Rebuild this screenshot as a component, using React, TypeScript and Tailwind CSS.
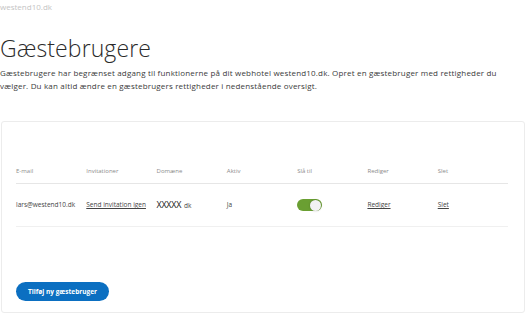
import React from 'react';

const COLUMNS = ['E-mail', 'Invitationer', 'Domæne', 'Aktiv', 'Slå til', 'Rediger', 'Slet'];

function Toggle({ on }: { on: boolean }) {
  return (
    <div className={`w-[25px] h-[12px] rounded-full flex items-center px-[1px] ${on ? 'bg-[#6a9f32] justify-end' : 'bg-gray-300 justify-start'}`}>
      <div className="w-[11px] h-[11px] rounded-full bg-[#f2f2f2] shadow-[0_0_2px_rgba(0,0,0,0.25)]" />
    </div>
  );
}

export default function App() {
  return (
    <div className="w-[527px] h-[317px] bg-white overflow-hidden font-['Open_Sans',sans-serif] text-[#333]">
      <div className="text-[8px] leading-[12px] text-[#c4c4c4] pt-[1px]">westend10.dk</div>

      <h1 className="mt-[20px] text-[23px] leading-[30px] font-light text-[#2a2a2a] tracking-[0.1px]">Gæstebrugere</h1>

      <p className="mt-[3px] text-[8px] leading-[13px] text-[#3a3a3a] tracking-[0.18px] pr-[8px]">
        Gæstebrugere har begrænset adgang til funktionerne på dit webhotel westend10.dk. Opret en gæstebruger med rettigheder du vælger. Du kan altid ændre en gæstebrugers rettigheder i nedenstående oversigt.
      </p>

      <div className="mt-[29px] ml-[1px] mr-[2px] h-[192px] border border-[#ececec] rounded-[3px] px-[14px] pt-[45px] flex flex-col">
        <div className="mr-[2px]">
          <div className="grid grid-cols-7 border-b border-[#e6e6e6] h-[17px] items-start text-[6px] leading-[8px] text-[#8c8c8c]">
            {COLUMNS.map(c => (
              <div key={c}>{c}</div>
            ))}
          </div>
          <div className="grid grid-cols-7 items-center border-b border-[#f0f0f0] h-[43px] text-[6.5px] text-[#444]">
            <div>lars@westend10.dk</div>
            <div><span className="underline">Send invitation igen</span></div>
            <div className="flex items-baseline gap-[3px]">
              <span className="text-[9px] tracking-[-0.3px] text-[#222]">XXXXX</span>
              <span>dk</span>
            </div>
            <div>Ja</div>
            <div><Toggle on /></div>
            <div><span className="underline">Rediger</span></div>
            <div><span className="underline">Slet</span></div>
          </div>
        </div>

        <div className="mt-auto mb-[11px]">
          <button className="h-[19px] w-[93px] rounded-full bg-[#0b6fc1] text-white text-[6.5px] font-bold flex items-center justify-center">
            Tilføj ny gæstebruger
          </button>
        </div>
      </div>
    </div>
  );
}
